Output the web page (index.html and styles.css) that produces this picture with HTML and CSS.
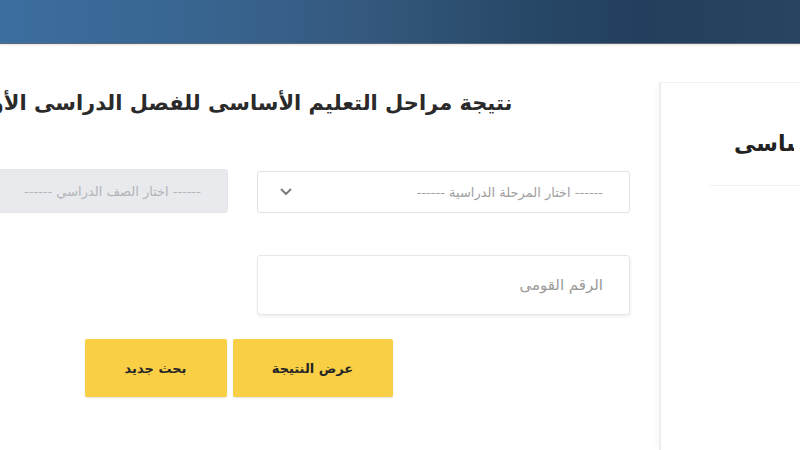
FILE: index.html
```html
<!DOCTYPE html>
<html lang="ar">
<head>
<meta charset="utf-8">
<title>نتيجة مراحل التعليم الأساسى</title>
<link rel="stylesheet" href="styles.css">
</head>
<body>
<header class="topbar"></header>
<div class="page">
  <aside class="side">
    <div class="side-head">
      <h2 class="side-title">نتيجة الشهادة الأساسى</h2>
    </div>
  </aside>
  <main class="form-area">
    <h1 class="title">نتيجة مراحل التعليم الأساسى للفصل الدراسى الأول</h1>
    <div class="grid">
      <div class="select">
        <span class="select-text">------ اختار المرحلة الدراسية ------</span>
        <svg class="chev" width="12" height="8" viewBox="0 0 12 8"><path d="M1.5 1.5 L6 6 L10.5 1.5" fill="none" stroke="#777" stroke-width="1.8" stroke-linecap="round" stroke-linejoin="round"/></svg>
      </div>
      <div class="select disabled">
        <span class="select-text">------ اختار الصف الدراسي ------</span>
      </div>
      <div class="input">
        <span class="placeholder">الرقم القومى</span>
      </div>
    </div>
    <div class="buttons">
      <button class="btn">عرض النتيجة</button>
      <button class="btn btn-new">بحث جديد</button>
    </div>
  </main>
</div>
</body>
</html>
```

FILE: styles.css
```css
html, body {
  margin: 0;
  padding: 0;
  width: 800px;
  height: 450px;
  overflow: hidden;
  background: #ffffff;
  font-family: "DejaVu Sans", "Noto Sans", sans-serif;
}
.topbar {
  height: 43px;
  background: linear-gradient(90deg, #3c6e9f 0%, #386590 25%, #35597f 45%, #2a4b6b 62%, #223f5d 80%, #284461 100%);
  box-shadow: 0 1px 0 #5a6878, 0 2px 2px rgba(0,0,0,0.12);
}
.page {
  display: flex;
  direction: rtl;
  gap: 29px;
  margin: 0 -200px 0 -145px;
  height: 407px;
}
.side {
  box-sizing: border-box;
  width: 341px;
  flex: none;
  margin-top: 39px;
  border-top: 1px solid #f0f0f0;
  border-left: 2px solid #ededed;
  box-shadow: -6px 0 6px -4px rgba(0,0,0,0.04);
}
.side-head {
  margin-left: 48px;
  padding-top: 46px;
  height: 56px;
  border-bottom: 1px solid #f1f1f1;
}
.side-title {
  direction: ltr;
  text-align: left;
  margin: 0 auto 0 25px;
  width: 60px;
  overflow: hidden;
  white-space: nowrap;
  font-size: 22px;
  font-weight: bold;
  color: #222;
  line-height: 30px;
}
.form-area {
  width: 775px;
  flex: none;
}
.title {
  margin: 44px 0 0 0;
  text-align: center;
  white-space: nowrap;
  font-size: 21px;
  font-weight: bold;
  color: #2a2a2a;
  line-height: 32px;
}
.grid {
  display: grid;
  grid-template-columns: 373px 373px;
  column-gap: 29px;
  row-gap: 42px;
  margin-top: 52px;
}
.select {
  box-sizing: border-box;
  height: 42px;
  border: 1px solid #e2e2e2;
  border-radius: 3px;
  display: flex;
  align-items: center;
  justify-content: space-between;
  padding: 0 26px 0 22px;
  background: #fff;
}
.select.disabled {
  background: #e8eaed;
  border-color: #e3e5e8;
  height: 44px;
  margin-top: -2px;
}
.select-text {
  font-size: 13px;
  color: #a0a0a0;
  white-space: nowrap;
}
.disabled .select-text {
  color: #b3b5b8;
}
.chev {
  display: block;
}
.input {
  box-sizing: border-box;
  height: 60px;
  border: 1px solid #e6e6e6;
  border-radius: 3px;
  box-shadow: 1px 2px 3px rgba(0,0,0,0.06);
  display: flex;
  align-items: center;
  padding: 0 26px;
}
.placeholder {
  font-size: 15px;
  color: #9a9a9a;
}
.buttons {
  display: flex;
  justify-content: center;
  gap: 6px;
  margin-top: 24px;
  padding-right: 8px;
}
.btn {
  width: 160px;
  height: 58px;
  border: none;
  border-radius: 2px;
  background: #f9cf45;
  box-shadow: 0 1px 2px rgba(0,0,0,0.12);
  font-family: "DejaVu Sans", "Noto Sans", sans-serif;
  font-size: 13px;
  font-weight: bold;
  color: #262626;
  direction: rtl;
}
.btn-new {
  width: 142px;
}
```
